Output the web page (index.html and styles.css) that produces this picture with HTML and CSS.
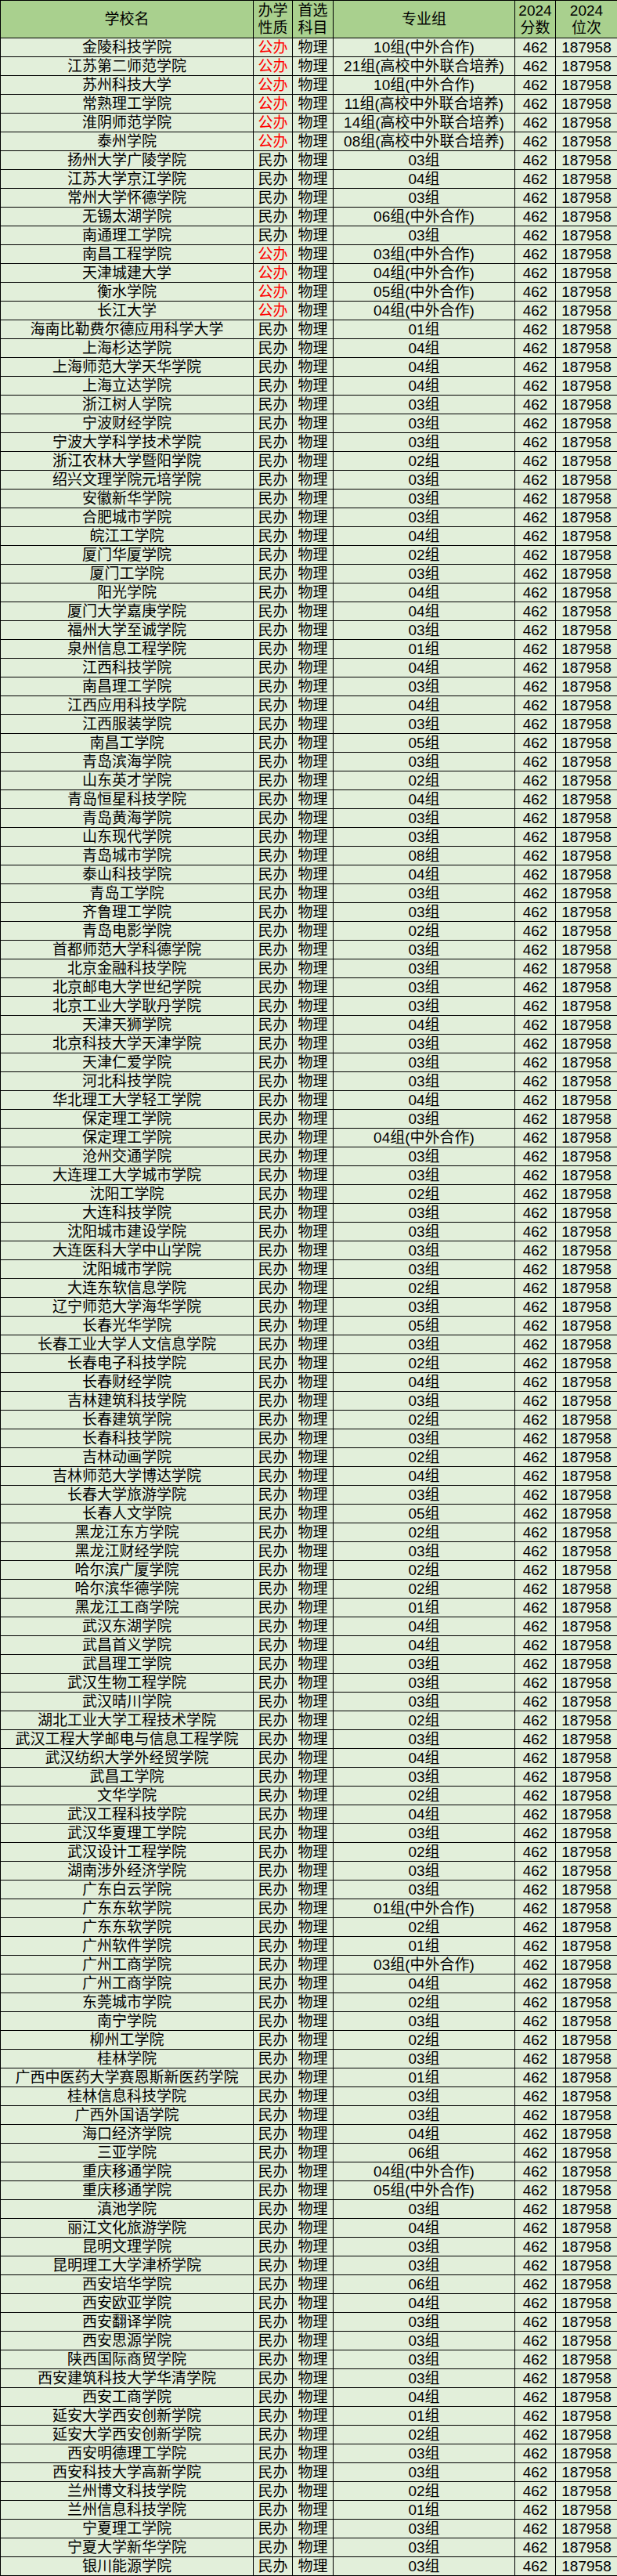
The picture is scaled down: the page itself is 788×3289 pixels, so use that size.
FILE: index.html
```html
<!DOCTYPE html>
<html lang="zh-CN">
<head>
<meta charset="utf-8">
<title>2024 分数 位次</title>
<link rel="stylesheet" href="styles.css">
</head>
<body>
<table class="sheet">
<colgroup><col class="c1"><col class="c2"><col class="c3"><col class="c4"><col class="c5"><col class="c6"></colgroup>
<thead>
<tr><th>学校名</th><th>办学<br>性质</th><th>首选<br>科目</th><th>专业组</th><th>2024<br>分数</th><th>2024<br>位次</th></tr>
</thead>
<tbody>
<tr><td>金陵科技学院</td><td class="pub">公办</td><td>物理</td><td>10组(中外合作)</td><td>462</td><td>187958</td></tr>
<tr><td>江苏第二师范学院</td><td class="pub">公办</td><td>物理</td><td>21组(高校中外联合培养)</td><td>462</td><td>187958</td></tr>
<tr><td>苏州科技大学</td><td class="pub">公办</td><td>物理</td><td>10组(中外合作)</td><td>462</td><td>187958</td></tr>
<tr><td>常熟理工学院</td><td class="pub">公办</td><td>物理</td><td>11组(高校中外联合培养)</td><td>462</td><td>187958</td></tr>
<tr><td>淮阴师范学院</td><td class="pub">公办</td><td>物理</td><td>14组(高校中外联合培养)</td><td>462</td><td>187958</td></tr>
<tr><td>泰州学院</td><td class="pub">公办</td><td>物理</td><td>08组(高校中外联合培养)</td><td>462</td><td>187958</td></tr>
<tr><td>扬州大学广陵学院</td><td>民办</td><td>物理</td><td>03组</td><td>462</td><td>187958</td></tr>
<tr><td>江苏大学京江学院</td><td>民办</td><td>物理</td><td>04组</td><td>462</td><td>187958</td></tr>
<tr><td>常州大学怀德学院</td><td>民办</td><td>物理</td><td>03组</td><td>462</td><td>187958</td></tr>
<tr><td>无锡太湖学院</td><td>民办</td><td>物理</td><td>06组(中外合作)</td><td>462</td><td>187958</td></tr>
<tr><td>南通理工学院</td><td>民办</td><td>物理</td><td>03组</td><td>462</td><td>187958</td></tr>
<tr><td>南昌工程学院</td><td class="pub">公办</td><td>物理</td><td>03组(中外合作)</td><td>462</td><td>187958</td></tr>
<tr><td>天津城建大学</td><td class="pub">公办</td><td>物理</td><td>04组(中外合作)</td><td>462</td><td>187958</td></tr>
<tr><td>衡水学院</td><td class="pub">公办</td><td>物理</td><td>05组(中外合作)</td><td>462</td><td>187958</td></tr>
<tr><td>长江大学</td><td class="pub">公办</td><td>物理</td><td>04组(中外合作)</td><td>462</td><td>187958</td></tr>
<tr><td>海南比勒费尔德应用科学大学</td><td>民办</td><td>物理</td><td>01组</td><td>462</td><td>187958</td></tr>
<tr><td>上海杉达学院</td><td>民办</td><td>物理</td><td>04组</td><td>462</td><td>187958</td></tr>
<tr><td>上海师范大学天华学院</td><td>民办</td><td>物理</td><td>04组</td><td>462</td><td>187958</td></tr>
<tr><td>上海立达学院</td><td>民办</td><td>物理</td><td>04组</td><td>462</td><td>187958</td></tr>
<tr><td>浙江树人学院</td><td>民办</td><td>物理</td><td>03组</td><td>462</td><td>187958</td></tr>
<tr><td>宁波财经学院</td><td>民办</td><td>物理</td><td>03组</td><td>462</td><td>187958</td></tr>
<tr><td>宁波大学科学技术学院</td><td>民办</td><td>物理</td><td>03组</td><td>462</td><td>187958</td></tr>
<tr><td>浙江农林大学暨阳学院</td><td>民办</td><td>物理</td><td>02组</td><td>462</td><td>187958</td></tr>
<tr><td>绍兴文理学院元培学院</td><td>民办</td><td>物理</td><td>03组</td><td>462</td><td>187958</td></tr>
<tr><td>安徽新华学院</td><td>民办</td><td>物理</td><td>03组</td><td>462</td><td>187958</td></tr>
<tr><td>合肥城市学院</td><td>民办</td><td>物理</td><td>03组</td><td>462</td><td>187958</td></tr>
<tr><td>皖江工学院</td><td>民办</td><td>物理</td><td>04组</td><td>462</td><td>187958</td></tr>
<tr><td>厦门华厦学院</td><td>民办</td><td>物理</td><td>02组</td><td>462</td><td>187958</td></tr>
<tr><td>厦门工学院</td><td>民办</td><td>物理</td><td>03组</td><td>462</td><td>187958</td></tr>
<tr><td>阳光学院</td><td>民办</td><td>物理</td><td>04组</td><td>462</td><td>187958</td></tr>
<tr><td>厦门大学嘉庚学院</td><td>民办</td><td>物理</td><td>04组</td><td>462</td><td>187958</td></tr>
<tr><td>福州大学至诚学院</td><td>民办</td><td>物理</td><td>03组</td><td>462</td><td>187958</td></tr>
<tr><td>泉州信息工程学院</td><td>民办</td><td>物理</td><td>01组</td><td>462</td><td>187958</td></tr>
<tr><td>江西科技学院</td><td>民办</td><td>物理</td><td>04组</td><td>462</td><td>187958</td></tr>
<tr><td>南昌理工学院</td><td>民办</td><td>物理</td><td>03组</td><td>462</td><td>187958</td></tr>
<tr><td>江西应用科技学院</td><td>民办</td><td>物理</td><td>04组</td><td>462</td><td>187958</td></tr>
<tr><td>江西服装学院</td><td>民办</td><td>物理</td><td>03组</td><td>462</td><td>187958</td></tr>
<tr><td>南昌工学院</td><td>民办</td><td>物理</td><td>05组</td><td>462</td><td>187958</td></tr>
<tr><td>青岛滨海学院</td><td>民办</td><td>物理</td><td>03组</td><td>462</td><td>187958</td></tr>
<tr><td>山东英才学院</td><td>民办</td><td>物理</td><td>02组</td><td>462</td><td>187958</td></tr>
<tr><td>青岛恒星科技学院</td><td>民办</td><td>物理</td><td>04组</td><td>462</td><td>187958</td></tr>
<tr><td>青岛黄海学院</td><td>民办</td><td>物理</td><td>03组</td><td>462</td><td>187958</td></tr>
<tr><td>山东现代学院</td><td>民办</td><td>物理</td><td>03组</td><td>462</td><td>187958</td></tr>
<tr><td>青岛城市学院</td><td>民办</td><td>物理</td><td>08组</td><td>462</td><td>187958</td></tr>
<tr><td>泰山科技学院</td><td>民办</td><td>物理</td><td>04组</td><td>462</td><td>187958</td></tr>
<tr><td>青岛工学院</td><td>民办</td><td>物理</td><td>03组</td><td>462</td><td>187958</td></tr>
<tr><td>齐鲁理工学院</td><td>民办</td><td>物理</td><td>03组</td><td>462</td><td>187958</td></tr>
<tr><td>青岛电影学院</td><td>民办</td><td>物理</td><td>02组</td><td>462</td><td>187958</td></tr>
<tr><td>首都师范大学科德学院</td><td>民办</td><td>物理</td><td>03组</td><td>462</td><td>187958</td></tr>
<tr><td>北京金融科技学院</td><td>民办</td><td>物理</td><td>03组</td><td>462</td><td>187958</td></tr>
<tr><td>北京邮电大学世纪学院</td><td>民办</td><td>物理</td><td>03组</td><td>462</td><td>187958</td></tr>
<tr><td>北京工业大学耿丹学院</td><td>民办</td><td>物理</td><td>03组</td><td>462</td><td>187958</td></tr>
<tr><td>天津天狮学院</td><td>民办</td><td>物理</td><td>04组</td><td>462</td><td>187958</td></tr>
<tr><td>北京科技大学天津学院</td><td>民办</td><td>物理</td><td>03组</td><td>462</td><td>187958</td></tr>
<tr><td>天津仁爱学院</td><td>民办</td><td>物理</td><td>03组</td><td>462</td><td>187958</td></tr>
<tr><td>河北科技学院</td><td>民办</td><td>物理</td><td>03组</td><td>462</td><td>187958</td></tr>
<tr><td>华北理工大学轻工学院</td><td>民办</td><td>物理</td><td>04组</td><td>462</td><td>187958</td></tr>
<tr><td>保定理工学院</td><td>民办</td><td>物理</td><td>03组</td><td>462</td><td>187958</td></tr>
<tr><td>保定理工学院</td><td>民办</td><td>物理</td><td>04组(中外合作)</td><td>462</td><td>187958</td></tr>
<tr><td>沧州交通学院</td><td>民办</td><td>物理</td><td>03组</td><td>462</td><td>187958</td></tr>
<tr><td>大连理工大学城市学院</td><td>民办</td><td>物理</td><td>03组</td><td>462</td><td>187958</td></tr>
<tr><td>沈阳工学院</td><td>民办</td><td>物理</td><td>02组</td><td>462</td><td>187958</td></tr>
<tr><td>大连科技学院</td><td>民办</td><td>物理</td><td>03组</td><td>462</td><td>187958</td></tr>
<tr><td>沈阳城市建设学院</td><td>民办</td><td>物理</td><td>03组</td><td>462</td><td>187958</td></tr>
<tr><td>大连医科大学中山学院</td><td>民办</td><td>物理</td><td>03组</td><td>462</td><td>187958</td></tr>
<tr><td>沈阳城市学院</td><td>民办</td><td>物理</td><td>03组</td><td>462</td><td>187958</td></tr>
<tr><td>大连东软信息学院</td><td>民办</td><td>物理</td><td>02组</td><td>462</td><td>187958</td></tr>
<tr><td>辽宁师范大学海华学院</td><td>民办</td><td>物理</td><td>03组</td><td>462</td><td>187958</td></tr>
<tr><td>长春光华学院</td><td>民办</td><td>物理</td><td>05组</td><td>462</td><td>187958</td></tr>
<tr><td>长春工业大学人文信息学院</td><td>民办</td><td>物理</td><td>03组</td><td>462</td><td>187958</td></tr>
<tr><td>长春电子科技学院</td><td>民办</td><td>物理</td><td>02组</td><td>462</td><td>187958</td></tr>
<tr><td>长春财经学院</td><td>民办</td><td>物理</td><td>04组</td><td>462</td><td>187958</td></tr>
<tr><td>吉林建筑科技学院</td><td>民办</td><td>物理</td><td>03组</td><td>462</td><td>187958</td></tr>
<tr><td>长春建筑学院</td><td>民办</td><td>物理</td><td>02组</td><td>462</td><td>187958</td></tr>
<tr><td>长春科技学院</td><td>民办</td><td>物理</td><td>03组</td><td>462</td><td>187958</td></tr>
<tr><td>吉林动画学院</td><td>民办</td><td>物理</td><td>02组</td><td>462</td><td>187958</td></tr>
<tr><td>吉林师范大学博达学院</td><td>民办</td><td>物理</td><td>04组</td><td>462</td><td>187958</td></tr>
<tr><td>长春大学旅游学院</td><td>民办</td><td>物理</td><td>03组</td><td>462</td><td>187958</td></tr>
<tr><td>长春人文学院</td><td>民办</td><td>物理</td><td>05组</td><td>462</td><td>187958</td></tr>
<tr><td>黑龙江东方学院</td><td>民办</td><td>物理</td><td>02组</td><td>462</td><td>187958</td></tr>
<tr><td>黑龙江财经学院</td><td>民办</td><td>物理</td><td>03组</td><td>462</td><td>187958</td></tr>
<tr><td>哈尔滨广厦学院</td><td>民办</td><td>物理</td><td>02组</td><td>462</td><td>187958</td></tr>
<tr><td>哈尔滨华德学院</td><td>民办</td><td>物理</td><td>02组</td><td>462</td><td>187958</td></tr>
<tr><td>黑龙江工商学院</td><td>民办</td><td>物理</td><td>01组</td><td>462</td><td>187958</td></tr>
<tr><td>武汉东湖学院</td><td>民办</td><td>物理</td><td>04组</td><td>462</td><td>187958</td></tr>
<tr><td>武昌首义学院</td><td>民办</td><td>物理</td><td>04组</td><td>462</td><td>187958</td></tr>
<tr><td>武昌理工学院</td><td>民办</td><td>物理</td><td>03组</td><td>462</td><td>187958</td></tr>
<tr><td>武汉生物工程学院</td><td>民办</td><td>物理</td><td>03组</td><td>462</td><td>187958</td></tr>
<tr><td>武汉晴川学院</td><td>民办</td><td>物理</td><td>03组</td><td>462</td><td>187958</td></tr>
<tr><td>湖北工业大学工程技术学院</td><td>民办</td><td>物理</td><td>02组</td><td>462</td><td>187958</td></tr>
<tr><td>武汉工程大学邮电与信息工程学院</td><td>民办</td><td>物理</td><td>03组</td><td>462</td><td>187958</td></tr>
<tr><td>武汉纺织大学外经贸学院</td><td>民办</td><td>物理</td><td>04组</td><td>462</td><td>187958</td></tr>
<tr><td>武昌工学院</td><td>民办</td><td>物理</td><td>03组</td><td>462</td><td>187958</td></tr>
<tr><td>文华学院</td><td>民办</td><td>物理</td><td>02组</td><td>462</td><td>187958</td></tr>
<tr><td>武汉工程科技学院</td><td>民办</td><td>物理</td><td>04组</td><td>462</td><td>187958</td></tr>
<tr><td>武汉华夏理工学院</td><td>民办</td><td>物理</td><td>03组</td><td>462</td><td>187958</td></tr>
<tr><td>武汉设计工程学院</td><td>民办</td><td>物理</td><td>02组</td><td>462</td><td>187958</td></tr>
<tr><td>湖南涉外经济学院</td><td>民办</td><td>物理</td><td>03组</td><td>462</td><td>187958</td></tr>
<tr><td>广东白云学院</td><td>民办</td><td>物理</td><td>03组</td><td>462</td><td>187958</td></tr>
<tr><td>广东东软学院</td><td>民办</td><td>物理</td><td>01组(中外合作)</td><td>462</td><td>187958</td></tr>
<tr><td>广东东软学院</td><td>民办</td><td>物理</td><td>02组</td><td>462</td><td>187958</td></tr>
<tr><td>广州软件学院</td><td>民办</td><td>物理</td><td>01组</td><td>462</td><td>187958</td></tr>
<tr><td>广州工商学院</td><td>民办</td><td>物理</td><td>03组(中外合作)</td><td>462</td><td>187958</td></tr>
<tr><td>广州工商学院</td><td>民办</td><td>物理</td><td>04组</td><td>462</td><td>187958</td></tr>
<tr><td>东莞城市学院</td><td>民办</td><td>物理</td><td>02组</td><td>462</td><td>187958</td></tr>
<tr><td>南宁学院</td><td>民办</td><td>物理</td><td>03组</td><td>462</td><td>187958</td></tr>
<tr><td>柳州工学院</td><td>民办</td><td>物理</td><td>02组</td><td>462</td><td>187958</td></tr>
<tr><td>桂林学院</td><td>民办</td><td>物理</td><td>03组</td><td>462</td><td>187958</td></tr>
<tr><td>广西中医药大学赛恩斯新医药学院</td><td>民办</td><td>物理</td><td>01组</td><td>462</td><td>187958</td></tr>
<tr><td>桂林信息科技学院</td><td>民办</td><td>物理</td><td>03组</td><td>462</td><td>187958</td></tr>
<tr><td>广西外国语学院</td><td>民办</td><td>物理</td><td>03组</td><td>462</td><td>187958</td></tr>
<tr><td>海口经济学院</td><td>民办</td><td>物理</td><td>04组</td><td>462</td><td>187958</td></tr>
<tr><td>三亚学院</td><td>民办</td><td>物理</td><td>06组</td><td>462</td><td>187958</td></tr>
<tr><td>重庆移通学院</td><td>民办</td><td>物理</td><td>04组(中外合作)</td><td>462</td><td>187958</td></tr>
<tr><td>重庆移通学院</td><td>民办</td><td>物理</td><td>05组(中外合作)</td><td>462</td><td>187958</td></tr>
<tr><td>滇池学院</td><td>民办</td><td>物理</td><td>03组</td><td>462</td><td>187958</td></tr>
<tr><td>丽江文化旅游学院</td><td>民办</td><td>物理</td><td>04组</td><td>462</td><td>187958</td></tr>
<tr><td>昆明文理学院</td><td>民办</td><td>物理</td><td>03组</td><td>462</td><td>187958</td></tr>
<tr><td>昆明理工大学津桥学院</td><td>民办</td><td>物理</td><td>03组</td><td>462</td><td>187958</td></tr>
<tr><td>西安培华学院</td><td>民办</td><td>物理</td><td>06组</td><td>462</td><td>187958</td></tr>
<tr><td>西安欧亚学院</td><td>民办</td><td>物理</td><td>04组</td><td>462</td><td>187958</td></tr>
<tr><td>西安翻译学院</td><td>民办</td><td>物理</td><td>03组</td><td>462</td><td>187958</td></tr>
<tr><td>西安思源学院</td><td>民办</td><td>物理</td><td>03组</td><td>462</td><td>187958</td></tr>
<tr><td>陕西国际商贸学院</td><td>民办</td><td>物理</td><td>03组</td><td>462</td><td>187958</td></tr>
<tr><td>西安建筑科技大学华清学院</td><td>民办</td><td>物理</td><td>03组</td><td>462</td><td>187958</td></tr>
<tr><td>西安工商学院</td><td>民办</td><td>物理</td><td>04组</td><td>462</td><td>187958</td></tr>
<tr><td>延安大学西安创新学院</td><td>民办</td><td>物理</td><td>01组</td><td>462</td><td>187958</td></tr>
<tr><td>延安大学西安创新学院</td><td>民办</td><td>物理</td><td>02组</td><td>462</td><td>187958</td></tr>
<tr><td>西安明德理工学院</td><td>民办</td><td>物理</td><td>03组</td><td>462</td><td>187958</td></tr>
<tr><td>西安科技大学高新学院</td><td>民办</td><td>物理</td><td>03组</td><td>462</td><td>187958</td></tr>
<tr><td>兰州博文科技学院</td><td>民办</td><td>物理</td><td>02组</td><td>462</td><td>187958</td></tr>
<tr><td>兰州信息科技学院</td><td>民办</td><td>物理</td><td>01组</td><td>462</td><td>187958</td></tr>
<tr><td>宁夏理工学院</td><td>民办</td><td>物理</td><td>03组</td><td>462</td><td>187958</td></tr>
<tr><td>宁夏大学新华学院</td><td>民办</td><td>物理</td><td>03组</td><td>462</td><td>187958</td></tr>
<tr><td>银川能源学院</td><td>民办</td><td>物理</td><td>03组</td><td>462</td><td>187958</td></tr>
</tbody>
</table>
</body>
</html>
```
FILE: styles.css
```css
html, body {
  margin: 0;
  padding: 0;
  background: #e2efda;
}

.sheet {
  width: 788px;
  table-layout: fixed;
  border-collapse: collapse;
  font-family: "Liberation Sans", "Noto Sans CJK SC", sans-serif;
  font-size: 19px;
  color: #000;
  background: #e2efda;
}

.c1 { width: 323px; }
.c2 { width: 50px; }
.c3 { width: 52px; }
.c4 { width: 232px; }
.c5 { width: 52px; }
.c6 { width: 79px; }

.sheet th,
.sheet td {
  border: 1px solid #000;
  padding: 0;
  text-align: center;
  vertical-align: middle;
  white-space: nowrap;
  overflow: hidden;
  font-weight: normal;
}

.sheet th {
  background: #a9d08e;
  height: 47px;
  line-height: 22px;
}

.sheet td {
  height: 23px;
  line-height: 23px;
}

.sheet td.pub {
  color: #ff0000;
}
```
